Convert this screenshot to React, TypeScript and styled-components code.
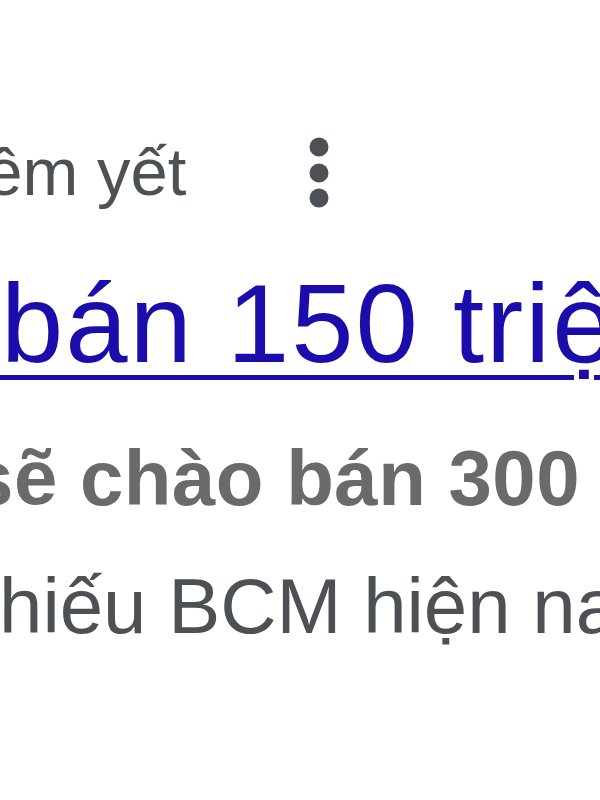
import { createGlobalStyle } from 'styled-components'
import styled from 'styled-components'

const GlobalStyle = createGlobalStyle`
    html, body {
        margin: 0;
        padding: 0;
        background: #ffffff;
        overflow: hidden;
    }
    body {
        font-family: 'Liberation Sans', Arial, sans-serif;
    }
`

export default function App() {
    return (
        <>
            <GlobalStyle />
            <Page>
                <MetaRow>
                    <MetaText>Niêm yết</MetaText>
                    <KebabButton aria-label="Thêm">
                        <svg width="20" height="72" viewBox="0 0 20 72">
                            <circle cx="10" cy="10" r="9.5" fill="#4d5156" />
                            <circle cx="10" cy="36" r="9.5" fill="#4d5156" />
                            <circle cx="10" cy="61" r="9.5" fill="#4d5156" />
                        </svg>
                    </KebabButton>
                </MetaRow>

                <TitleRow>
                    <TitleLink href="#">chào bán 150 triệu cổ phiếu</TitleLink>
                </TitleRow>

                <Snippet>
                    <SnippetLine $shift={-30} $spacing={0.5}>
                        <Em>sẽ chào bán 300</Em> triệu cổ phiếu
                    </SnippetLine>
                    <SnippetLine $shift={-1} $spacing={0}>
                        hiếu BCM hiện nay
                    </SnippetLine>
                </Snippet>
            </Page>
        </>
    )
}

const Page = styled.div`
    width: 600px;
    height: 800px;
    overflow: hidden;
    display: flex;
    flex-direction: column;
    padding-top: 122px;
    box-sizing: border-box;
`

const MetaRow = styled.div`
    display: flex;
    align-items: center;
    height: 100px;
    white-space: nowrap;
`

const MetaText = styled.span`
    font-size: 67px;
    line-height: 100px;
    color: #4d5156;
    margin-left: -78px;
`

const KebabButton = styled.button`
    display: flex;
    align-items: center;
    justify-content: center;
    background: none;
    border: none;
    padding: 0;
    margin-left: 123px;
    margin-top: 2px;
`

const TitleRow = styled.div`
    margin-top: 37px;
    height: 130px;
    white-space: nowrap;
`

const TitleLink = styled.a`
    display: inline-block;
    font-size: 112px;
    line-height: 130px;
    letter-spacing: 2px;
    color: #1a0dab;
    margin-left: -283px;
    text-decoration: underline;
    text-decoration-thickness: 5px;
    text-underline-offset: 13px;
    text-decoration-skip-ink: auto;
`

const Snippet = styled.div`
    margin-top: 25px;
    display: flex;
    flex-direction: column;
`

const SnippetLine = styled.span<{ $shift: number; $spacing: number }>`
    display: block;
    font-size: 78px;
    line-height: 128px;
    color: #4d5156;
    white-space: nowrap;
    letter-spacing: ${(p) => p.$spacing}px;
    margin-left: ${(p) => p.$shift}px;
`

const Em = styled.b`
    font-weight: bold;
    color: #6a6a6a;
`
